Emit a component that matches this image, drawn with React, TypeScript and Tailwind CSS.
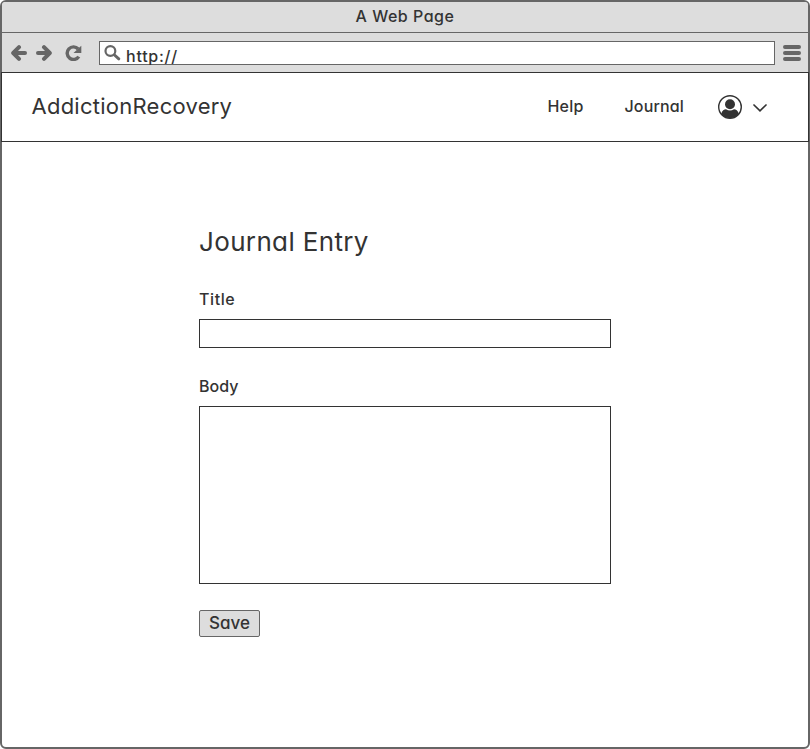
import React from "react";

function Label({ children, className }: { children: React.ReactNode; className: string }) {
  return <span className={`block whitespace-nowrap [font-feature-settings:'cv11'] ${className}`}>{children}</span>;
}

function ArrowLeft({ className = "" }: { className?: string }) {
  return (
    <svg width="16" height="16" viewBox="0 0 16 16" className={className} fill="none" stroke="#666" strokeLinecap="round" strokeLinejoin="round">
      <path d="M3 8H14" strokeWidth="4" />
      <path d="M8 2.2 2.2 8 8 13.8" strokeWidth="4" />
      <path d="M5 6v4" strokeWidth="3" />
    </svg>
  );
}

export default function App() {
  return (
    <div className="flex h-[749px] w-[810px] flex-col rounded-md border-2 border-[#666] bg-white font-['Inter',sans-serif] font-medium text-[#333]">
      <div className="flex h-[31px] shrink-0 justify-center rounded-t-[3px] border-b border-[#666] bg-[#ddd] pt-[3px]">
        <Label className="text-base leading-[22px] tracking-[0.5px]">A Web Page</Label>
      </div>
      <div className="flex h-[39px] shrink-0 items-center bg-[#ddd] pl-[9px] pr-[7px]">
        <ArrowLeft />
        <ArrowLeft className="ml-[9px] rotate-180" />
        <svg width="17" height="16" viewBox="0 0 17 16" className="ml-[13px]">
          <path d="M13.2 4A6.3 6.3 0 1 0 13.8 11.6" fill="none" stroke="#666" strokeWidth="3.4" />
          <path d="M16.3 .8V8H8.5z" fill="#666" />
        </svg>
        <div className="ml-[17px] flex h-6 w-[676px] border border-[#666] bg-white pl-1 pt-[3px]">
          <svg width="17" height="16" viewBox="0 0 17 16" fill="none" stroke="#666">
            <circle cx="6.4" cy="6" r="4.9" strokeWidth="2.2" />
            <path d="M10.5 10 14.8 13.8" strokeWidth="3" strokeLinecap="round" />
          </svg>
          <Label className="ml-[5px] text-base leading-[22px] tracking-[0.75px]">http://</Label>
        </div>
        <svg width="18" height="16" viewBox="0 0 18 16" className="ml-auto" stroke="#666" strokeWidth="4" strokeLinecap="round">
          <path d="M2 2H16M2 8H16M2 14H16" />
        </svg>
      </div>
      <header className="-mx-px flex h-[70px] shrink-0 items-center border border-[#333] pl-[29.5px] pr-[41px]">
        <Label className="-mt-0.5 text-[22px] font-normal tracking-[0.25px]">AddictionRecovery</Label>
        <nav className="ml-auto flex items-center">
          <Label className="-mt-0.5 mr-[41px] text-base tracking-[0.2px]">Help</Label>
          <Label className="-mt-0.5 mr-[34px] text-base tracking-[0.15px]">Journal</Label>
          <svg width="24" height="24" viewBox="0 0 24 24">
            <circle cx="12" cy="12" r="11.3" fill="none" stroke="#333" strokeWidth="1.4" />
            <circle cx="12" cy="9.3" r="5" fill="#333" />
            <path d="M3.2 19C4 15.5 6.2 14.2 8 14.2Q12 16.8 16 14.2C17.8 14.2 20 15.5 20.8 19A11.3 11.3 0 0 1 3.2 19" fill="#333" />
          </svg>
          <svg width="14" height="8" viewBox="0 0 14 8" className="ml-[11px] mt-px" fill="none" stroke="#333" strokeWidth="1.7" strokeLinecap="round">
            <path d="m1 1 6 5.8L13 1" />
          </svg>
        </nav>
      </header>
      <main className="ml-[197px] flex w-[412px] flex-col items-start pt-[82px]">
        <Label className="text-[26px] leading-9 font-normal tracking-[0.35px]">Journal Entry</Label>
        <Label className="mt-[28px] text-base leading-[22px] tracking-[0.6px]">Title</Label>
        <div className="mt-[9px] h-[29px] w-full border border-[#333]" />
        <Label className="mt-[27px] text-base leading-[22px]">Body</Label>
        <div className="mt-[9px] h-[178px] w-full border border-[#333]" />
        <button className="mt-[26px] flex h-[27px] w-[61px] justify-center rounded-[2px] border border-[#666] bg-[#ddd] pt-px">
          <Label className="text-[17px] leading-[23px]">Save</Label>
        </button>
      </main>
    </div>
  );
}
